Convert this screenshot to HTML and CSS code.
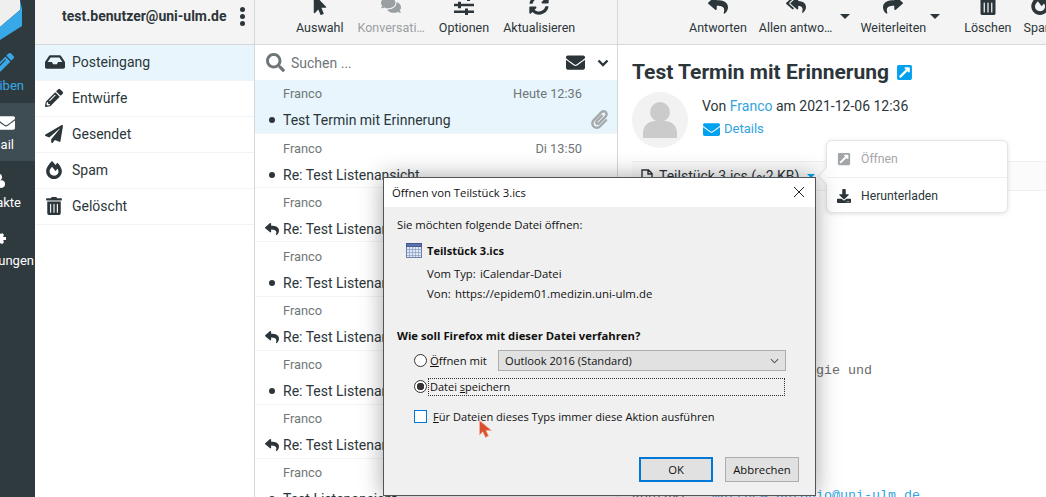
FILE: index.html
```html
<!DOCTYPE html>
<html lang="de">
<head>
<meta charset="utf-8">
<title>Öffnen von Teilstück 3.ics</title>
<link rel="stylesheet" href="styles.css">
</head>
<body>
<svg class="sprite" aria-hidden="true">
  <symbol id="i-reply" viewBox="0 0 512 512"><path d="M8.309 189.836L184.313 37.851C199.719 24.546 224 35.347 224 56.015v80.053c160.629 1.839 288 34.032 288 186.258 0 61.441-39.581 122.309-83.333 154.132-13.653 9.931-33.111-2.533-28.077-18.631 45.344-145.012-21.507-183.51-176.59-185.742V360c0 20.7-24.3 31.453-39.687 18.164l-176.004-152c-11.071-9.562-11.086-26.753 0-36.328z"/></symbol>
  <symbol id="i-replyall" viewBox="0 0 576 512"><path d="M136.309 189.836L312.313 37.851C327.72 24.546 352 35.348 352 56.015v82.763c129.182 10.231 224 52.212 224 183.548 0 61.441-39.582 122.309-83.333 154.132-13.653 9.931-33.111-2.533-28.077-18.631 38.512-123.162-3.922-169.482-112.59-182.015v84.175c0 20.701-24.3 31.453-39.687 18.164L136.309 226.164c-11.071-9.561-11.086-26.753 0-36.328zm-128 36.328L184.313 378.15C199.7 391.439 224 380.687 224 359.986v-15.818l-108.606-93.785A55.96 55.96 0 0 1 96 207.998a55.953 55.953 0 0 1 19.393-42.38L224 71.832V56.015c0-20.667-24.28-31.469-39.687-18.164L8.309 189.836c-11.086 9.575-11.071 26.767 0 36.328z"/></symbol>
  <symbol id="i-share" viewBox="0 0 512 512"><path d="M503.691 189.836L327.687 37.851C312.281 24.546 288 35.347 288 56.015v80.053C127.371 137.907 0 170.1 0 322.326c0 61.441 39.581 122.309 83.333 154.132 13.653 9.931 33.111-2.533 28.077-18.631C66.066 312.814 132.917 274.316 288 272.085V360c0 20.7 24.3 31.453 39.687 18.164l176.004-152c11.071-9.562 11.086-26.753 0-36.328z"/></symbol>
  <symbol id="i-trash" viewBox="0 0 448 512"><path d="M32 464a48 48 0 0 0 48 48h288a48 48 0 0 0 48-48V128H32zm272-256a16 16 0 0 1 32 0v224a16 16 0 0 1-32 0zm-96 0a16 16 0 0 1 32 0v224a16 16 0 0 1-32 0zm-96 0a16 16 0 0 1 32 0v224a16 16 0 0 1-32 0zM432 32H312l-9.4-18.7A24 24 0 0 0 281.1 0H166.8a23.72 23.72 0 0 0-21.4 13.3L136 32H16A16 16 0 0 0 0 48v32a16 16 0 0 0 16 16h416a16 16 0 0 0 16-16V48a16 16 0 0 0-16-16z"/></symbol>
  <symbol id="i-search" viewBox="0 0 512 512"><path d="M505 442.7L405.3 343c-4.5-4.5-10.6-7-17-7H372c27.6-35.3 44-79.7 44-128C416 93.1 322.9 0 208 0S0 93.1 0 208s93.1 208 208 208c48.3 0 92.7-16.4 128-44v16.3c0 6.4 2.5 12.5 7 17l99.7 99.7c9.4 9.4 24.6 9.4 33.9 0l28.3-28.3c9.4-9.4 9.4-24.6.1-34zM208 336c-70.7 0-128-57.2-128-128 0-70.7 57.2-128 128-128 70.7 0 128 57.2 128 128 0 70.7-57.2 128-128 128z"/></symbol>
  <symbol id="i-env" viewBox="0 0 512 512"><path d="M502.3 190.8c3.9-3.1 9.7-.2 9.7 4.7V400c0 26.5-21.5 48-48 48H48c-26.5 0-48-21.5-48-48V195.6c0-5 5.7-7.8 9.7-4.7 22.4 17.4 52.1 39.5 154.1 113.6 21.1 15.4 56.7 47.8 92.2 47.6 35.7.3 72-32.8 92.3-47.6 102-74.1 131.6-96.3 154-113.7zM256 320c23.2.4 56.6-29.2 73.4-41.4 132.7-96.3 142.8-104.7 173.4-128.7 5.8-4.5 9.2-11.5 9.2-18.9v-19c0-26.5-21.5-48-48-48H48C21.5 64 0 85.5 0 112v19c0 7.4 3.4 14.3 9.2 18.9 30.6 23.9 40.7 32.4 173.4 128.7 16.8 12.2 50.2 41.8 73.4 41.4z"/></symbol>
  <symbol id="i-plane" viewBox="0 0 512 512"><path d="M476 3.2L12.5 270.6c-18.1 10.4-15.8 35.6 2.2 43.2L121 358.4l287.3-253.2c5.5-4.9 13.3 2.6 8.6 8.3L176 407v80.5c0 23.6 28.5 32.9 42.5 15.8L282 426l124.6 52.2c14.2 6 30.4-2.9 33-18.2l72-432C515 7.8 493.3-6.8 476 3.2z"/></symbol>
  <symbol id="i-pencil" viewBox="0 0 512 512"><path d="M497.9 142.1l-46.1 46.1c-4.7 4.7-12.3 4.7-17 0l-111-111c-4.7-4.7-4.7-12.3 0-17l46.1-46.1c18.7-18.7 49.1-18.7 67.9 0l60.1 60.1c18.8 18.7 18.8 49.1 0 67.9zM284.2 99.8L21.6 362.4.4 483.9c-2.9 16.4 11.4 30.6 27.8 27.8l121.5-21.3 262.6-262.6c4.7-4.7 4.7-12.3 0-17l-111-111c-4.8-4.7-12.4-4.7-17.1 0zM124.1 339.9c-5.5-5.5-5.5-14.3 0-19.8l154-154c5.5-5.5 14.3-5.5 19.8 0s5.5 14.3 0 19.8l-154 154c-5.5 5.5-14.3 5.5-19.8 0zM88 424h48v36.3l-64.5 11.3-31.1-31.1L51.7 376H88v48z"/></symbol>
  <symbol id="i-pointer" viewBox="0 0 320 512"><path d="M302.189 329.126H196.105l55.831 135.993c3.889 9.428-.555 19.999-9.444 23.999l-49.165 21.427c-9.165 4-19.443-.571-23.332-9.714l-53.053-129.136-86.664 89.138C18.729 472.71 0 463.554 0 447.977V18.299C0 1.899 19.921-6.096 30.277 5.443l284.412 292.542c11.472 11.179 3.007 31.141-12.5 31.141z"/></symbol>
  <symbol id="i-sync" viewBox="0 0 512 512"><path d="M370.72 133.28C339.458 104.008 298.888 87.962 255.848 88c-77.458.068-144.328 53.178-162.791 126.85-1.344 5.363-6.122 9.15-11.651 9.15H24.103c-7.498 0-13.194-6.807-11.807-14.176C33.933 94.924 134.813 8 256 8c66.448 0 126.791 26.136 171.315 68.685L463.03 40.97C478.149 25.851 504 36.559 504 57.941V192c0 13.255-10.745 24-24 24H345.941c-21.382 0-32.09-25.851-16.971-40.971l41.75-41.749zM32 296h134.059c21.382 0 32.09 25.851 16.971 40.971l-41.75 41.75c31.262 29.273 71.835 45.319 114.876 45.28 77.418-.07 144.315-53.144 162.787-126.849 1.344-5.363 6.122-9.15 11.651-9.15h57.304c7.498 0 13.194 6.807 11.807 14.176C478.067 417.076 377.187 504 256 504c-66.448 0-126.791-26.136-171.315-68.685L48.97 471.03C33.851 486.149 8 475.441 8 454.059V320c0-13.255 10.745-24 24-24z"/></symbol>
  <symbol id="i-comments" viewBox="0 0 576 512"><path d="M416 192c0-88.4-93.1-160-208-160S0 103.6 0 192c0 34.3 14.1 65.9 38 92-13.4 30.2-35.5 54.2-35.8 54.5-2.2 2.3-2.8 5.7-1.5 8.7S4.8 352 8 352c36.6 0 66.9-12.3 88.7-25 32.2 15.7 70.3 25 111.3 25 114.9 0 208-71.6 208-160zm122 220c23.9-26 38-57.7 38-92 0-66.9-53.5-124.2-129.3-148.1.9 6.6 1.3 13.3 1.3 20.1 0 105.9-107.7 192-240 192-10.8 0-21.3-.8-31.7-1.9C207.8 439.6 281.8 480 368 480c41 0 79.1-9.2 111.3-25 21.8 12.7 52.1 25 88.7 25 3.2 0 6.1-1.9 7.3-4.8 1.3-2.9.7-6.3-1.5-8.7-.3-.3-22.4-24.2-35.8-54.5z"/></symbol>
  <symbol id="i-inbox" viewBox="0 0 576 512"><path d="M567.938 243.908L462.25 85.374A48.003 48.003 0 0 0 422.311 64H153.689a48 48 0 0 0-39.938 21.374L8.062 243.908A47.994 47.994 0 0 0 0 270.533V400c0 26.51 21.49 48 48 48h480c26.51 0 48-21.49 48-48V270.533a47.994 47.994 0 0 0-8.062-26.625zM162.252 128h251.497l85.333 128H376l-32 64H232l-32-64H76.918l85.334-128z"/></symbol>
  <symbol id="i-fire" viewBox="0 0 448 512"><path d="M323.56 51.2c-20.8 19.3-39.58 39.59-56.22 59.97C240.08 73.62 206.28 35.53 168 0 69.74 91.17 0 209.96 0 281.6 0 408.85 100.29 512 224 512s224-103.15 224-230.4c0-53.27-51.98-163.14-124.44-230.4zm-19.47 340.65C282.43 407.01 255.72 416 226.86 416 154.71 416 96 368.26 96 290.75c0-38.61 24.31-72.63 72.79-130.75 6.93 7.98 98.83 125.34 98.83 125.34l58.63-66.88c4.14 6.85 7.91 13.55 11.27 19.97 27.35 52.19 15.81 118.97-33.43 153.42z"/></symbol>
  <symbol id="i-download" viewBox="0 0 512 512"><path d="M216 0h80c13.3 0 24 10.7 24 24v168h87.7c17.8 0 26.7 21.5 14.1 34.1L269.7 378.3c-7.5 7.5-19.8 7.5-27.3 0L90.1 226.1c-12.6-12.6-3.7-34.1 14.1-34.1H192V24c0-13.3 10.7-24 24-24zm296 376v112c0 13.3-10.7 24-24 24H24c-13.3 0-24-10.7-24-24V376c0-13.3 10.7-24 24-24h146.7l49 49c20.1 20.1 52.5 20.1 72.6 0l49-49H488c13.3 0 24 10.7 24 24zm-124 88c0-11-9-20-20-20s-20 9-20 20 9 20 20 20 20-9 20-20zm64 0c0-11-9-20-20-20s-20 9-20 20 9 20 20 20 20-9 20-20z"/></symbol>
  <symbol id="i-ext" viewBox="0 0 448 512"><path d="M448 80v352c0 26.51-21.49 48-48 48H48c-26.51 0-48-21.49-48-48V80c0-26.51 21.49-48 48-48h352c26.51 0 48 21.49 48 48zm-88 16H248.029c-21.313 0-32.08 25.861-16.971 40.971l31.984 31.987L67.515 364.485c-4.686 4.686-4.686 12.284 0 16.971l31.029 31.029c4.687 4.686 12.285 4.686 16.971 0l195.526-195.526 31.988 31.991C358.058 263.977 384 253.425 384 231.979V120c0-13.255-10.745-24-24-24z"/></symbol>
  <symbol id="i-clip" viewBox="0 0 448 512"><path d="M43.246 466.142c-58.43-60.289-57.341-157.511 1.386-217.581L254.392 34c44.316-45.332 116.351-45.336 160.671 0 43.89 44.894 43.943 117.329 0 162.276L232.214 383.128c-29.855 30.537-78.633 30.111-107.982-.998-28.275-29.97-27.368-77.473 1.452-106.953l143.743-146.835c6.182-6.314 16.312-6.422 22.626-.241l22.861 22.379c6.315 6.182 6.422 16.312.241 22.626L171.427 319.927c-4.932 5.045-5.236 13.428-.648 18.292 4.372 4.634 11.245 4.711 15.688.165l182.849-186.851c19.613-20.062 19.613-52.725-.011-72.798-19.189-19.627-49.957-19.637-69.154 0L90.39 293.295c-34.763 35.56-35.299 93.12-1.191 128.313 34.01 35.093 88.985 35.137 123.058.286l172.06-175.999c6.177-6.319 16.307-6.433 22.626-.256l22.877 22.364c6.319 6.177 6.434 16.307.256 22.626l-172.06 175.998c-59.576 60.938-155.943 60.216-214.77-.485z"/></symbol>
  <symbol id="i-sliders" viewBox="0 0 20 20"><path d="M0 2h20v2.400H0zM0 8.800h20v2.400H0zM0 15.600h20V18H0z"/><path d="M13 0h3v6h-3zM4 6.800h3v6.400H4zM11 13.600h3V20h-3z"/></symbol>
  <symbol id="i-people" viewBox="0 0 20 20"><circle cx="9" cy="5" r="4"/><circle cx="3.500" cy="12" r="3.500"/><circle cx="12" cy="13" r="4.500"/><path d="M1 15h8v3H1z"/></symbol>
  <symbol id="i-gear" viewBox="0 0 20 20"><circle cx="10" cy="10" r="7"/><path d="M8 0h4v20H8zM0 8h20v4H0zM2.500 5.300l2.800-2.800 12.200 12.200-2.800 2.800zM14.700 2.500l2.800 2.800L5.300 17.500l-2.800-2.800z"/></symbol>
</svg>

<div class="app">
  <nav class="rail">
    <svg class="rail-logo" viewBox="0 0 35 45" aria-hidden="true">
      <path class="logo-white" d="M-6 0H20V10L0 27-6 24z"/>
      <path class="logo-blue" d="M20 0 22 9V26L0 40V27L20 10z"/>
    </svg>
    <a class="rail-item rail-compose"><svg class="rail-ico"><use href="#i-pencil"/></svg><span>Schreiben</span></a>
    <a class="rail-item rail-active"><svg class="rail-ico"><use href="#i-env"/></svg><span>E-Mail</span></a>
    <a class="rail-item rail-contacts"><svg class="rail-ico"><use href="#i-people"/></svg><span>Kontakte</span></a>
    <a class="rail-item rail-settings"><svg class="rail-ico"><use href="#i-gear"/></svg><span>Einstellungen</span></a>
  </nav>

  <aside class="folders">
    <header class="folders-head">
      <strong>test.benutzer@uni-ulm.de</strong>
      <span class="kebab"><i></i><i></i><i></i></span>
    </header>
    <ul class="folder-list">
      <li class="folder folder-on"><svg class="folder-ico folder-ico-wide"><use href="#i-inbox"/></svg>Posteingang</li>
      <li class="folder"><svg class="folder-ico"><use href="#i-pencil"/></svg>Entwürfe</li>
      <li class="folder"><svg class="folder-ico"><use href="#i-plane"/></svg>Gesendet</li>
      <li class="folder"><svg class="folder-ico"><use href="#i-fire"/></svg>Spam</li>
      <li class="folder"><svg class="folder-ico"><use href="#i-trash"/></svg>Gelöscht</li>
    </ul>
  </aside>

  <section class="list">
    <div class="toolbar toolbar-list">
      <a class="tool"><svg class="tool-ico"><use href="#i-pointer"/></svg>Auswahl</a>
      <a class="tool tool-off"><svg class="tool-ico"><use href="#i-comments"/></svg>Konversati…</a>
      <a class="tool"><svg class="tool-ico"><use href="#i-sliders"/></svg>Optionen</a>
      <a class="tool"><svg class="tool-ico"><use href="#i-sync"/></svg>Aktualisieren</a>
    </div>
    <div class="search">
      <svg class="search-ico"><use href="#i-search"/></svg>
      <span class="search-text">Suchen ...</span>
      <svg class="search-env"><use href="#i-env"/></svg>
      <svg class="search-chev" viewBox="0 0 12 8"><path d="M1.500 1.500L6 6l4.500-4.500"/></svg>
    </div>
    <ul class="msgs">
      <li class="msg msg-on"><div class="msg-top"><span>Franco</span><span>Heute 12:36</span></div><div class="msg-sub"><i class="dot"></i>Test Termin mit Erinnerung<svg class="msg-clip"><use href="#i-clip"/></svg></div></li>
      <li class="msg"><div class="msg-top"><span>Franco</span><span>Di 13:50</span></div><div class="msg-sub"><i class="dot"></i>Re: Test Listenansicht</div></li>
      <li class="msg"><div class="msg-top"><span>Franco</span><span>Di 13:48</span></div><div class="msg-sub"><svg class="msg-reply"><use href="#i-reply"/></svg>Re: Test Listenansicht</div></li>
      <li class="msg"><div class="msg-top"><span>Franco</span><span>Di 13:45</span></div><div class="msg-sub"><i class="dot"></i>Re: Test Listenansicht</div></li>
      <li class="msg"><div class="msg-top"><span>Franco</span><span>Di 13:40</span></div><div class="msg-sub"><svg class="msg-reply"><use href="#i-reply"/></svg>Re: Test Listenansicht</div></li>
      <li class="msg"><div class="msg-top"><span>Franco</span><span>Di 13:35</span></div><div class="msg-sub"><i class="dot"></i>Re: Test Listenansicht</div></li>
      <li class="msg"><div class="msg-top"><span>Franco</span><span>Di 13:30</span></div><div class="msg-sub"><svg class="msg-reply"><use href="#i-reply"/></svg>Re: Test Listenansicht</div></li>
      <li class="msg"><div class="msg-top"><span>Franco</span><span>Di 13:25</span></div><div class="msg-sub"><i class="dot"></i>Test Listenansicht</div></li>
    </ul>
  </section>

  <main class="content">
    <div class="toolbar toolbar-main">
      <a class="tool"><svg class="tool-ico"><use href="#i-reply"/></svg>Antworten</a>
      <a class="tool"><svg class="tool-ico"><use href="#i-replyall"/></svg>Allen antwo…</a>
      <i class="caret"></i>
      <a class="tool"><svg class="tool-ico"><use href="#i-share"/></svg>Weiterleiten</a>
      <i class="caret caret-b"></i>
      <a class="tool tool-del"><svg class="tool-ico"><use href="#i-trash"/></svg>Löschen</a>
      <a class="tool"><svg class="tool-ico"><use href="#i-fire"/></svg>Spam</a>
    </div>
    <div class="mail">
      <h1 class="subject">Test Termin mit Erinnerung<svg class="subject-ico"><use href="#i-ext"/></svg></h1>
      <div class="sender">
        <svg class="avatar" viewBox="0 0 56 56" aria-hidden="true">
          <circle class="avatar-bg" cx="28" cy="28" r="28"/>
          <circle class="avatar-fg" cx="28" cy="20" r="10"/>
          <path class="avatar-fg" d="M11 46V41c0-7 5-12 12-12H33c7 0 12 5 12 12v5z"/>
        </svg>
        <div class="sender-text">
          <p>Von <a class="link">Franco</a> am 2021-12-06 12:36</p>
          <p class="details"><svg class="details-ico"><use href="#i-env"/></svg><a class="link">Details</a></p>
        </div>
      </div>
      <div class="attach">
        <svg class="attach-ico" viewBox="0 0 12 14"><path d="M1 1h6.500L11 4.500V13H1zM7 1v4h4"/></svg>
        Teilstück 3.ics (~2 KB)
        <i class="attach-caret"></i>
      </div>
      <pre class="mono mono-a">Institut für Epidemiologie und</pre>
      <pre class="mono mono-b">Kontakt:  <a class="link">matthew.antonio@uni-ulm.de</a></pre>
    </div>
  </main>
</div>

<div class="popup">
  <i class="popup-arrow"></i>
  <div class="popup-row popup-off"><svg class="popup-ico"><use href="#i-ext"/></svg>Öffnen</div>
  <div class="popup-row"><svg class="popup-ico"><use href="#i-download"/></svg>Herunterladen</div>
</div>

<div class="dialog">
  <div class="dlg-title">
    <span>Öffnen von Teilstück 3.ics</span>
    <svg class="dlg-close" viewBox="0 0 10 10"><path d="M0 0l10 10M10 0L0 10"/></svg>
  </div>
  <div class="dlg-body">
    <p class="dlg-intro">Sie möchten folgende Datei öffnen:</p>
    <div class="dlg-file">
      <svg class="cal" viewBox="0 0 16 16" aria-hidden="true">
        <rect class="cal-bg" x="0.500" y="1.500" width="15" height="14"/>
        <rect class="cal-head" x="0.500" y="1.500" width="15" height="3"/>
        <path class="cal-grid" d="M0.500 7.500h15M0.500 10.500h15M0.500 13.500h15M3.500 4.500v11M6.500 4.500v11M9.500 4.500v11M12.500 4.500v11"/>
      </svg>
      <strong>Teilstück 3.ics</strong>
    </div>
    <div class="dlg-meta"><span>Vom Typ:</span><span>iCalendar-Datei</span></div>
    <div class="dlg-meta dlg-meta-b"><span>Von:</span><span>https://epidem01.medizin.uni-ulm.de</span></div>
    <p class="dlg-q">Wie soll Firefox mit dieser Datei verfahren?</p>
    <div class="dlg-opt">
      <i class="radio"></i>
      <span class="opt-label"><u>Ö</u>ffnen mit</span>
      <div class="select">Outlook 2016 (Standard)<svg class="select-chev" viewBox="0 0 10 6"><path d="M1 1l4 4 4-4"/></svg></div>
    </div>
    <div class="dlg-opt dlg-opt-b">
      <i class="radio radio-on"></i>
      <span class="opt-focus">Datei <u>s</u>peichern</span>
    </div>
    <div class="dlg-check">
      <i class="checkbox"></i>
      <span><u>F</u>ür Dateien dieses Typs immer diese Aktion ausführen</span>
    </div>
    <div class="dlg-actions">
      <button class="btn btn-ok" type="button">OK</button>
      <button class="btn" type="button">Abbrechen</button>
    </div>
  </div>
  <svg class="cursor" viewBox="0 0 13 18" aria-hidden="true"><path d="M0.500 0.500V15L3.800 11.800 6.500 17.500 9.500 16 7 10.500H12.500z"/></svg>
</div>
</body>
</html>
```

FILE: styles.css
```css
* { box-sizing: border-box; }
html, body { margin: 0; height: 100%; }
body {
  width: 1046px;
  height: 497px;
  overflow: hidden;
  position: relative;
  font-family: Roboto, "Liberation Sans", sans-serif;
  font-size: 14px;
  color: #2c363a;
  background: #fff;
}
ul { list-style: none; margin: 0; padding: 0; }
p, h1, pre { margin: 0; }
svg { fill: currentColor; display: block; flex: none; }
.sprite { display: none; }
.app { display: flex; height: 497px; }

/* rail */
.rail { width: 35px; flex: none; background: #2f3a3f; overflow: hidden; color: #fff; }
.rail-logo { width: 35px; height: 45px; }
.logo-white { fill: #efefef; }
.logo-blue { fill: #37a9e8; }
.rail-item {
  height: 58px;
  display: flex;
  flex-direction: column;
  align-items: flex-end;
  justify-content: flex-end;
  padding-bottom: 8px;
  font-size: 13px;
  line-height: 16px;
  white-space: nowrap;
}
.rail-item span { flex: none; }
.rail-ico { width: 20px; height: 20px; margin: 0 12px 5px 0; }
.rail-compose { color: #37a9e8; padding-bottom: 9px; }
.rail-compose span { margin-right: 11px; }
.rail-compose .rail-ico { margin-right: 21px; }
.rail-active { background: #3e4c53; }
.rail-active span { margin-right: 21px; }
.rail-active .rail-ico { margin-right: 20px; width: 18px; height: 18px; }
.rail-contacts span { margin-right: 14px; }
.rail-contacts .rail-ico { margin-right: 27px; width: 17px; height: 17px; }
.rail-settings span { margin-right: 1px; }
.rail-settings .rail-ico { margin: 0 29px 7px 0; width: 15px; height: 15px; }

/* folders */
.folders { width: 220px; flex: none; border-right: 1px solid #d4d8da; }
.folders-head {
  height: 45px;
  background: #f4f4f4;
  border-bottom: 1px solid #d4d8da;
  display: flex;
  align-items: center;
  padding: 0 9px 12px 27px;
  justify-content: space-between;
}
.folders-head strong { font-weight: 700; font-size: 14px; }
.kebab { display: flex; flex-direction: column; gap: 2px; }
.kebab i { width: 5px; height: 5px; border-radius: 50%; background: #2c363a; }
.folder {
  height: 36px;
  display: flex;
  align-items: center;
  gap: 9px;
  padding: 0 0 2px 10px;
  border-bottom: 1px solid #f1f3f4;
}
.folder-on { background: #e8f5fc; }
.folder-ico { width: 18px; height: 18px; }
.folder-ico-wide { width: 20px; height: 20px; margin-right: -2px; }

/* toolbars */
.toolbar {
  height: 45px;
  background: #f4f4f4;
  border-bottom: 1px solid #d4d8da;
  display: flex;
  align-items: flex-end;
  font-size: 12.500px;
  overflow: hidden;
}
.toolbar-list { padding: 0 0 8px 41px; gap: 14px; }
.toolbar-main { padding: 0 0 8px 71px; gap: 12px; white-space: nowrap; }
.tool { display: flex; flex-direction: column; align-items: center; line-height: 16px; flex: none; }
.tool-ico { width: 20px; height: 20px; margin: 0 0 5px; }
.tool-off { color: #9a9fa2; }
.tool-del { margin-left: 16px; }
.caret {
  width: 0;
  height: 0;
  border: 5px solid transparent;
  border-top-color: #2c363a;
  border-bottom: 0;
  align-self: flex-start;
  margin: 14px -2px 0 -4px;
}
.caret-b { margin: 14px -4px 0 -8px; }

/* list */
.list { width: 363px; flex: none; border-right: 1px solid #d4d8da; overflow: hidden; }
.search { height: 35px; display: flex; align-items: center; padding: 0 8px 0 11px; }
.search-ico { width: 19px; height: 19px; color: #6f7679; }
.search-text { margin-left: 6px; color: #6f7679; flex: 1; }
.search-env { width: 19px; height: 19px; margin-right: 12px; }
.search-chev { width: 12px; height: 8px; fill: none; stroke: #2c363a; stroke-width: 2.400; }
.msg { height: 54.17px; border-bottom: 1px solid #f1f3f4; padding: 5.400px 35px 0 28px; position: relative; }
.msg-on { background: #e8f5fc; }
.msg-top { display: flex; justify-content: space-between; font-size: 12.800px; line-height: 17px; color: #6f7679; }
.msg-sub { display: flex; align-items: center; height: 18px; margin-top: 9px; position: relative; }
.dot { width: 6px; height: 6px; border-radius: 50%; background: #2c363a; position: absolute; left: -14px; top: 6px; }
.msg-reply { width: 14px; height: 14px; position: absolute; left: -18px; top: 2px; }
.msg-clip { width: 17px; height: 19px; color: #a6a9aa; position: absolute; left: 308px; top: -1px; }

/* mail */
.content { flex: 1; min-width: 0; overflow: hidden; }
.mail { position: relative; height: 452px; padding: 13px 0 0 14px; }
.subject { font-size: 21px; line-height: 28px; font-weight: 700; display: flex; align-items: center; gap: 8px; }
.subject-ico { width: 15px; height: 17px; color: #00a2ef; }
.sender { display: flex; gap: 14px; margin-top: 6px; }
.avatar { width: 56px; height: 56px; }
.avatar-bg { fill: #f2f2f2; }
.avatar-fg { fill: #cbcbcb; }
.sender-text { padding-top: 5px; line-height: 18px; }
.details { display: flex; align-items: center; gap: 4px; margin-top: 5px; font-size: 13px; }
.details-ico { width: 17px; height: 17px; color: #00a2ef; margin-left: 1px; }
.link { color: #2fa3e0; }
.attach {
  margin-top: 13px;
  height: 30px;
  border-top: 1px solid #eef0f1;
  border-bottom: 1px solid #eef0f1;
  background: #fbfbfb;
  display: flex;
  align-items: center;
  padding-left: 9px;
  gap: 6px;
  font-size: 14px;
}
.attach-ico { width: 12px; height: 14px; fill: none; stroke: #2c363a; stroke-width: 1.400; }
.attach-caret { width: 0; height: 0; border: 4px solid transparent; border-top-color: #00a2ef; border-bottom: 0; margin-left: 2px; }
.mono { font-family: "Liberation Mono", monospace; font-size: 13.330px; line-height: 15px; color: #6a6a6a; }
.mono-a { margin-top: 172px; }
.mono-b { margin-top: 110px; }

/* popup */
.popup {
  position: absolute;
  left: 826px;
  top: 140px;
  width: 182px;
  height: 73px;
  background: #fff;
  border: 1px solid #e3e6e7;
  border-radius: 6px;
  box-shadow: 0 1px 4px rgba(0,0,0,.12);
  font-size: 12.200px;
}
.popup-arrow {
  position: absolute;
  left: -7px;
  top: 29px;
  width: 12px;
  height: 12px;
  background: #fff;
  border-left: 1px solid #e3e6e7;
  border-bottom: 1px solid #e3e6e7;
  transform: rotate(45deg);
}
.popup-row {
  height: 36px;
  display: flex;
  align-items: center;
  gap: 10px;
  padding-left: 10px;
  position: relative;
}
.popup-row + .popup-row { border-top: 1px solid #eef0f1; }
.popup-ico { width: 14px; height: 14px; }
.popup-off { color: #a3a6a8; }

/* dialog */
.dialog {
  position: absolute;
  left: 383px;
  top: 177px;
  width: 433px;
  height: 319px;
  background: #f0f0f0;
  border: 1px solid #50555a;
  box-shadow: 0 0 22px rgba(0,0,0,.35);
  font-family: "Open Sans", "Noto Sans", sans-serif;
  font-size: 11.300px;
  color: #111;
}
.dlg-title {
  height: 29px;
  background: #fff;
  display: flex;
  align-items: center;
  justify-content: space-between;
  padding: 0 11px 1px 8px;
}
.dlg-close { width: 10px; height: 10px; fill: none; stroke: #222; stroke-width: 1; }
.dlg-body { padding: 9px 16px 0 13px; }
.dlg-intro { line-height: 17px; }
.dlg-file { display: flex; align-items: center; gap: 5px; margin: 8px 0 0 9px; height: 18px; }
.dlg-file strong { font-weight: 700; font-size: 11.100px; }
.cal { width: 16px; height: 16px; }
.cal-bg { fill: #dfe6f4; stroke: #6e7fa8; }
.cal-head { fill: #5a72b0; stroke: #46588a; }
.cal-grid { fill: none; stroke: #7f92bd; stroke-width: .6; }
.dlg-meta { display: flex; gap: 5px; margin: 6px 0 0 30px; line-height: 17px; white-space: nowrap; }
.dlg-meta span:first-child { width: 48px; }
.dlg-meta-b { margin-top: 3px; font-size: 11.400px; }
.dlg-meta-b span:first-child { width: 23px; }
.dlg-q { font-weight: 700; margin-top: 25px; line-height: 17px; }
.dlg-opt { display: flex; align-items: center; margin: 6px 0 0 17px; height: 21px; }
.dlg-opt-b { margin-top: 6px; height: 19px; font-size: 11px; }
.radio {
  width: 13px;
  height: 13px;
  border: 1px solid #333;
  border-radius: 50%;
  background: #fff;
  flex: none;
}
.radio-on { background: radial-gradient(circle, #333 0 3.500px, #fff 4px); }
.opt-label { margin-left: 3px; width: 68px; }
.select {
  width: 288px;
  height: 21px;
  background: #e1e1e1;
  border: 1px solid #adadad;
  display: flex;
  align-items: center;
  justify-content: space-between;
  padding: 0 6px;
  font-size: 11.150px;
}
.select-chev { width: 9px; height: 6px; fill: none; stroke: #555; stroke-width: 1.200; }
.opt-focus {
  margin-left: 1px;
  width: 357px;
  height: 18px;
  line-height: 16px;
  padding-left: 1px;
  border: 1px dotted #333;
}
.dlg-check { display: flex; align-items: center; gap: 6px; margin: 13px 0 0 17px; height: 14px; font-size: 11.100px; }
.checkbox { width: 13px; height: 13px; border: 1px solid #0078d7; background: #fff; flex: none; }
.dlg-actions { display: flex; gap: 12px; justify-content: flex-end; margin-top: 34px; }
.btn {
  width: 74px;
  height: 25px;
  font: inherit;
  color: #111;
  background: #e1e1e1;
  border: 1px solid #adadad;
  padding: 0;
}
.btn-ok { border: 2px solid #0078d7; }
.cursor {
  position: absolute;
  left: 95px;
  top: 242px;
  width: 13px;
  height: 18px;
  fill: #d9502e;
  stroke: #f3b39f;
  stroke-width: .7;
}
```
